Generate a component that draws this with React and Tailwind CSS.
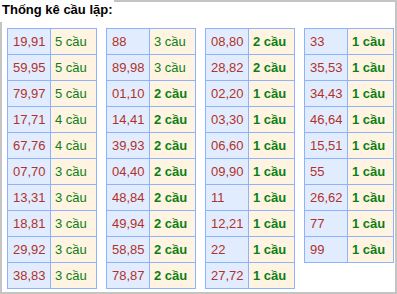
import React from "react";

const tables = [
  [["19,91",5],["59,95",5],["79,97",5],["17,71",4],["67,76",4],["07,70",3],["13,31",3],["18,81",3],["29,92",3],["38,83",3]],
  [["88",3],["89,98",3],["01,10",2],["14,41",2],["39,93",2],["04,40",2],["48,84",2],["49,94",2],["58,85",2],["78,87",2]],
  [["08,80",2],["28,82",2],["02,20",1],["03,30",1],["06,60",1],["09,90",1],["11",1],["12,21",1],["22",1],["27,72",1]],
  [["33",1],["35,53",1],["34,43",1],["46,64",1],["15,51",1],["55",1],["26,62",1],["77",1],["99",1]],
];

function Table({ rows }) {
  return (
    <div className="w-[90px] border-t border-l border-[#8db3ff] grid grid-cols-[43px_46px] self-start">
      {rows.map(([n, c], i) => (
        <React.Fragment key={i}>
          <div className="h-[26px] border-r border-b border-[#8db3ff] bg-[#e1edff] pl-[5px] flex items-center text-[#b2312a]">
            {n}
          </div>
          <div className={"h-[26px] border-r border-b border-[#8db3ff] bg-[#fff4e1] pl-[4px] flex items-center text-[#0b7f14] " + (c <= 2 ? "font-bold" : "font-normal")}>
            {c} cầu
          </div>
        </React.Fragment>
      ))}
    </div>
  );
}

export default function App() {
  return (
    <div className="w-[397px] h-[294px] bg-white border-2 border-[#c4c4c4] font-['Liberation_Sans',Arial,sans-serif] text-[13px] leading-[15px]">
      <div className="-mt-[2px] -ml-[2px] w-[114px] h-[22px] bg-white pt-[2px] pl-[2px] font-bold text-black">
        Thống kê cầu lặp:
      </div>
      <div className="flex gap-[9px] pl-[5px] mt-[6px]">
        {tables.map((t, i) => (
          <Table key={i} rows={t} />
        ))}
      </div>
    </div>
  );
}
